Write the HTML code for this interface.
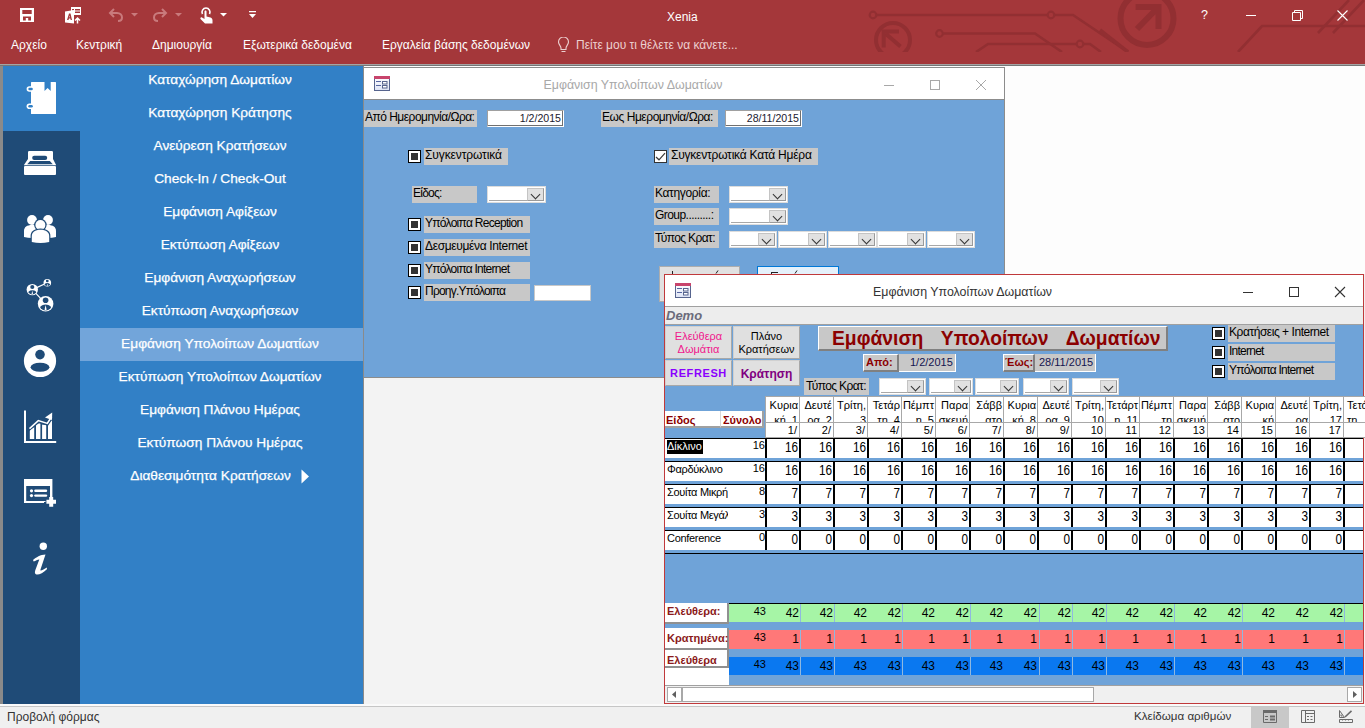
<!DOCTYPE html>
<html><head><meta charset="utf-8">
<style>
*{margin:0;padding:0;box-sizing:border-box}
html,body{width:1365px;height:728px;overflow:hidden;background:#f3f3f3;font-family:"Liberation Sans",sans-serif;position:relative}
.a{position:absolute}
.t{position:absolute;white-space:nowrap;line-height:1}
#title{left:0;top:0;width:1365px;height:64px;background:#a4373a}
.menu{color:#fff;font-size:12px;top:39px}
.nav{left:78.5px;width:283px;color:#fff;font-size:13.7px;text-align:center;-webkit-text-stroke:0.25px #fff}
.lbl{background:#c8c8c8;color:#000;font-size:12px;letter-spacing:-0.45px;line-height:14px;padding-left:1px;white-space:nowrap;overflow:hidden}
.cb{width:13px;height:13px;border:1px solid #000;background:#fff}
.cb:after{content:"";position:absolute;left:2px;top:2px;width:7px;height:7px;background:#333}
.inp{background:#fff;border-top:1px solid #a0a0a0;border-left:1px solid #a0a0a0;border-right:1px solid #fff;border-bottom:1px solid #fff;box-shadow:inset -1px -1px 0 #707070}
.cbk{width:13px;height:13px;border:1px solid #333;background:#fff}
.combo{background:#fff;border:1px solid #dcdcdc}
.combo:before{content:"";position:absolute;left:1px;right:18px;bottom:1px;height:1px;background:#a8a8a8}
.combo i{position:absolute;right:1px;top:1px;bottom:1px;width:17px;background:#e1e1e1;border:1px solid #c4c4c4;border-right-color:#9a9a9a;border-bottom-color:#9a9a9a}
.combo i:after{content:"";position:absolute;left:4px;top:2px;width:6px;height:6px;border-right:1px solid #333;border-bottom:1px solid #333;transform:rotate(45deg)}
.btn{background:#e0e0e0;border:1px solid #d0d0d0;border-right-color:#a8a8a8;border-bottom-color:#a8a8a8}
.raised{border-top:1px solid #fff;border-left:1px solid #fff;border-right:2px solid #808080;border-bottom:2px solid #808080}
.hdr{background:#fff;border-right:2px solid #a0a0a0;border-bottom:2px solid #a0a0a0}
.dh{background:#fff;border:1px solid #a8a8a8;overflow:hidden}
.dl{position:absolute;right:1px;top:1px;font-size:11px;line-height:14.5px;text-align:right;color:#000;white-space:pre}
.dd{background:#fff;border:1px solid #a8a8a8;border-top:0;font-size:11px;text-align:right;padding-right:2px;line-height:15px;color:#000}
.lab2{background:#fff;border-right:2px solid #909090;border-bottom:2px solid #909090}
</style></head><body>

<!-- Title bar + ribbon tabs -->
<div class="a" id="title"></div>
<div class="t" style="left:667px;top:11px;color:#fff;font-size:12px">Xenia</div>
<div class="t menu" style="left:11px">Αρχείο</div>
<div class="t menu" style="left:76px">Κεντρική</div>
<div class="t menu" style="left:152px">Δημιουργία</div>
<div class="t menu" style="left:243px">Εξωτερικά δεδομένα</div>
<div class="t menu" style="left:382px">Εργαλεία βάσης δεδομένων</div>
<div class="t menu" style="left:576px;color:#ecd0d0">Πείτε μου τι θέλετε να κάνετε...</div>

<!-- gray separator -->
<div class="a" style="left:0;top:64px;width:1365px;height:1px;background:#a4a4a4"></div><div class="a" style="left:0;top:65px;width:1365px;height:1px;background:#767676"></div>

<!-- Nav form -->
<div class="a" style="left:0;top:66px;width:3px;height:638px;background:#8a8a8a"></div>
<div class="a" style="left:3px;top:66px;width:360px;height:638px;background:#3280c6"></div>
<div class="a" style="left:3px;top:131px;width:77px;height:573px;background:#1f4b77"></div>
<div class="a" style="left:80px;top:328px;width:283px;height:33px;background:#72a5da"></div>
<div class="a" style="left:363px;top:66px;width:1px;height:638px;background:#8a8a8a"></div>

<div class="t nav" style="top:72.5px">Καταχώρηση Δωματίων</div>
<div class="t nav" style="top:105.5px">Καταχώρηση Κράτησης</div>
<div class="t nav" style="top:138.5px">Ανεύρεση Κρατήσεων</div>
<div class="t nav" style="top:171.5px">Check-In / Check-Out</div>
<div class="t nav" style="top:204.5px">Εμφάνιση Αφίξεων</div>
<div class="t nav" style="top:237.5px">Εκτύπωση Αφίξεων</div>
<div class="t nav" style="top:270.5px">Εμφάνιση Αναχωρήσεων</div>
<div class="t nav" style="top:303.5px">Εκτύπωση Αναχωρήσεων</div>
<div class="t nav" style="top:336.5px">Εμφάνιση Υπολοίπων Δωματίων</div>
<div class="t nav" style="top:369.5px">Εκτύπωση Υπολοίπων Δωματίων</div>
<div class="t nav" style="top:402.5px">Εμφάνιση Πλάνου Ημέρας</div>
<div class="t nav" style="top:435.5px">Εκτύπωση Πλάνου Ημέρας</div>
<div class="t nav" style="top:468.5px;left:69px">Διαθεσιμότητα Κρατήσεων</div>

<!-- Back window -->
<div class="a" style="left:364px;top:66px;width:1001px;height:312px;background:#fdfdfd"></div>
<div class="a" style="left:364px;top:67px;width:641px;height:311px;border:1px solid #8c8c8c;border-left:0;background:#6fa3d8"></div>
<div class="a" style="left:364px;top:68px;width:640px;height:32px;background:#fff;border-bottom:1px solid #8c8c8c"></div>
<div class="t" style="left:543.5px;top:78.5px;font-size:12.4px;color:#a8a8a8">Εμφάνιση Υπολοίπων Δωματίων</div>

<div class="a lbl" style="left:364px;top:110px;width:113px;height:17px;letter-spacing:-0.52px">Από Ημερομηνία/Ωρα:</div>
<div class="a inp" style="left:487px;top:110px;width:77px;height:17px"></div>
<div class="t" style="left:480px;width:81px;text-align:right;top:113px;font-size:10.6px;color:#1a1a30">1/2/2015</div>
<div class="a lbl" style="left:601px;top:110px;width:117px;height:17px;letter-spacing:-0.45px">Εως Ημερομηνία/Ωρα:</div>
<div class="a inp" style="left:725px;top:110px;width:77px;height:17px"></div>


<div class="t" style="left:700px;width:99px;text-align:right;top:113px;font-size:10.6px;color:#1a1a30">28/11/2015</div>

<div class="a cb" style="left:408px;top:150px"></div>
<div class="a lbl" style="left:424px;top:148px;width:84px;height:17px;letter-spacing:-0.11px">Συγκεντρωτικά</div>
<div class="a cbk" style="left:654px;top:150px"></div>
<div class="a lbl" style="left:669px;top:148px;width:149px;height:17px;padding-left:2px;letter-spacing:-0.22px">Συγκεντρωτικά Κατά Ημέρα</div>

<div class="a lbl" style="left:412px;top:186px;width:65px;height:17px;letter-spacing:-0.75px">Είδος:</div>
<div class="a combo" style="left:487px;top:186px;width:59px;height:17px"><i></i></div>

<div class="a cb" style="left:408px;top:218px"></div>
<div class="a lbl" style="left:424px;top:216px;width:106px;height:17px;letter-spacing:-0.72px">Υπόλοιπα Reception</div>
<div class="a cb" style="left:408px;top:241px"></div>
<div class="a lbl" style="left:424px;top:239px;width:106px;height:17px;letter-spacing:-0.35px">Δεσμευμένα Internet</div>
<div class="a cb" style="left:408px;top:264px"></div>
<div class="a lbl" style="left:424px;top:262px;width:106px;height:17px;letter-spacing:-0.75px">Υπόλοιπα Internet</div>
<div class="a cb" style="left:408px;top:286px"></div>
<div class="a lbl" style="left:424px;top:284px;width:106px;height:17px;letter-spacing:-0.78px">Προηγ.Υπόλοιπα</div>
<div class="a" style="left:534px;top:285px;width:57px;height:16px;background:#fff;border:1px solid #c8c8c8"></div>

<div class="a lbl" style="left:654px;top:186px;width:65px;height:17px;letter-spacing:-0.34px">Κατηγορία:</div>
<div class="a combo" style="left:729px;top:186px;width:59px;height:17px"><i></i></div>
<div class="a lbl" style="left:654px;top:208px;width:65px;height:17px;letter-spacing:-0.55px">Group.........:</div>
<div class="a combo" style="left:729px;top:208px;width:59px;height:17px"><i></i></div>
<div class="a lbl" style="left:654px;top:231px;width:65px;height:17px;letter-spacing:-0.61px">Τύπος Κρατ:</div>
<div class="a combo" style="left:729px;top:231px;width:48px;height:17px"><i></i></div>
<div class="a combo" style="left:778px;top:231px;width:49px;height:17px"><i></i></div>
<div class="a combo" style="left:828px;top:231px;width:49px;height:17px"><i></i></div>
<div class="a combo" style="left:877px;top:231px;width:49px;height:17px"><i></i></div>
<div class="a combo" style="left:927px;top:231px;width:48px;height:17px"><i></i></div>

<div class="a" style="left:659px;top:266px;width:81px;height:36px;background:#e1e1e1;border:1px solid #adadad"></div>
<div class="a" style="left:757px;top:266px;width:82px;height:20px;background:#e5f1fb;border:1px solid #0078d7"></div>

<div class="a" style="left:672px;top:271px;width:1px;height:3px;background:#222"></div>
<svg class="a" style="left:715px;top:270px" width="4" height="4"><path d="M1 3.5L3 0.5" stroke="#222" stroke-width="1"/></svg>
<div class="a" style="left:771px;top:272px;width:7px;height:1px;background:#222"></div><div class="a" style="left:771px;top:272px;width:1px;height:2px;background:#222"></div>
<svg class="a" style="left:794px;top:270px" width="4" height="4"><path d="M1 3.5L3 0.5" stroke="#222" stroke-width="1"/></svg>
<!-- window buttons back -->
<div class="a" style="left:884px;top:85px;width:10px;height:1px;background:#a8a8a8"></div>
<div class="a" style="left:930px;top:80px;width:10px;height:10px;border:1px solid #a8a8a8"></div>
<svg class="a" style="left:975px;top:79px" width="12" height="12"><path d="M1 1L11 11M11 1L1 11" stroke="#a8a8a8" stroke-width="1"/></svg>

<!-- FRONT START -->
<div class="a" style="left:664px;top:274px;width:701px;height:430px;background:#6fa3d8;border:1px solid #c0393b;border-right:0"></div>
<div class="a" style="left:1363px;top:274px;width:1px;height:430px;background:#c0393b"></div>
<div class="a" style="left:1364px;top:274px;width:1px;height:430px;background:#f0f0f0"></div>
<div class="a" style="left:665px;top:275px;width:698px;height:32px;background:#fff;border-bottom:1px solid #a0a0a0"></div>
<div class="t" style="left:873px;top:285.5px;font-size:12.4px;color:#333">Εμφάνιση Υπολοίπων Δωματίων</div>
<div class="a" style="left:1243px;top:292px;width:10px;height:1px;background:#333"></div>
<div class="a" style="left:1289px;top:287px;width:10px;height:10px;border:1px solid #333"></div>
<svg class="a" style="left:1334px;top:286px" width="12" height="12"><path d="M1 1L11 11M11 1L1 11" stroke="#333" stroke-width="1.1"/></svg>
<div class="a" style="left:665px;top:307px;width:698px;height:18px;background:#ededed;border-bottom:1px solid #a0a0a0"></div>
<div class="t" style="left:666px;top:309px;font-size:13px;font-weight:bold;font-style:italic;color:#6b6b7b">Demo</div>
<div class="a btn" style="left:665px;top:326px;width:67px;height:33px"><div style="color:#f0168c;font-size:11px;line-height:13px;padding-top:3px;text-align:center">Ελεύθερα<br>Δωμάτια</div></div>
<div class="a btn" style="left:733px;top:326px;width:67px;height:33px"><div style="color:#000;font-size:11px;line-height:13px;padding-top:3px;text-align:center">Πλάνο<br>Κρατήσεων</div></div>
<div class="a btn" style="left:665px;top:360px;width:67px;height:26px"><div style="color:#8a00ff;font-size:11px;font-weight:bold;line-height:25px;text-align:center;letter-spacing:0.6px">REFRESH</div></div>
<div class="a btn" style="left:733px;top:360px;width:67px;height:26px"><div style="color:#800080;font-size:12px;font-weight:bold;line-height:26px;text-align:center">Κράτηση</div></div>
<div class="a raised" style="left:818px;top:326px;width:350px;height:25px;background:#c8c8c8"></div>
<div class="t" style="left:832px;top:329px;font-size:19.3px;font-weight:bold;color:#8b0000;word-spacing:12.5px">Εμφάνιση Υπολοίπων Δωματίων</div>
<div class="a raised" style="left:863px;top:354px;width:36px;height:18px;background:#c8c8c8"></div>
<div class="t" style="left:866px;top:357px;font-size:11px;font-weight:bold;color:#8b0000">Από:</div>
<div class="a" style="left:899px;top:354px;width:57px;height:18px;background:#c8c8c8;border-right:1px solid #fff;border-bottom:1px solid #fff"></div>
<div class="t" style="left:910px;top:357px;font-size:11px;color:#141450">1/2/2015</div>
<div class="a raised" style="left:1003px;top:354px;width:32px;height:18px;background:#c8c8c8"></div>
<div class="t" style="left:1005px;top:357px;font-size:11px;font-weight:bold;color:#8b0000">Έως:</div>
<div class="a" style="left:1035px;top:354px;width:61px;height:18px;background:#c8c8c8;border-right:1px solid #fff;border-bottom:1px solid #fff"></div>
<div class="t" style="left:1039px;top:357px;font-size:11px;color:#141450">28/11/2015</div>
<div class="a lbl" style="left:804px;top:378px;width:65px;height:17px;padding-left:2px;line-height:17px;letter-spacing:-0.61px">Τύπος Κρατ:</div>
<div class="a combo" style="left:879px;top:378px;width:47px;height:17px"><i></i></div>
<div class="a combo" style="left:929px;top:378px;width:44px;height:17px"><i></i></div>
<div class="a combo" style="left:975px;top:378px;width:44px;height:17px"><i></i></div>
<div class="a combo" style="left:1023px;top:378px;width:46px;height:17px"><i></i></div>
<div class="a combo" style="left:1072px;top:378px;width:47px;height:17px"><i></i></div>
<div class="a cb" style="left:1212px;top:327px"></div>
<div class="a lbl" style="left:1228px;top:325px;width:107px;height:17px;letter-spacing:-0.46px">Κρατήσεις + Internet</div>
<div class="a cb" style="left:1212px;top:346px"></div>
<div class="a lbl" style="left:1228px;top:344px;width:107px;height:17px;letter-spacing:-0.76px">Internet</div>
<div class="a cb" style="left:1212px;top:365px"></div>
<div class="a lbl" style="left:1228px;top:363px;width:107px;height:17px;letter-spacing:-0.75px">Υπόλοιπα Internet</div>
<div class="a" style="left:665px;top:411px;width:56px;height:17px;background:#fff;border-right:1px solid #d8d8d8;border-bottom:2px solid #a0a0a0"></div>
<div class="a hdr" style="left:721px;top:411px;width:43px;height:17px"></div>
<div class="t" style="left:666px;top:415px;font-size:11px;font-weight:bold;color:#8b0000">Είδος</div>
<div class="t" style="left:723px;top:415px;font-size:11px;font-weight:bold;color:#8b0000">Σύνολο</div>
<div class="a dh" style="left:765px;top:396px;width:35px;height:27px"><div class="dl">Κυρια<br>κή  1</div></div>
<div class="a dd" style="left:765px;top:423px;width:35px;height:15px">1/</div>
<div class="a dh" style="left:799px;top:396px;width:35px;height:27px"><div class="dl">Δευτέ<br>ρα  2</div></div>
<div class="a dd" style="left:799px;top:423px;width:35px;height:15px">2/</div>
<div class="a dh" style="left:833px;top:396px;width:35px;height:27px"><div class="dl">Τρίτη,<br>3</div></div>
<div class="a dd" style="left:833px;top:423px;width:35px;height:15px">3/</div>
<div class="a dh" style="left:867px;top:396px;width:35px;height:27px"><div class="dl">Τετάρ<br>τη  4</div></div>
<div class="a dd" style="left:867px;top:423px;width:35px;height:15px">4/</div>
<div class="a dh" style="left:901px;top:396px;width:35px;height:27px"><div class="dl">Πέμπτ<br>η  5</div></div>
<div class="a dd" style="left:901px;top:423px;width:35px;height:15px">5/</div>
<div class="a dh" style="left:935px;top:396px;width:35px;height:27px"><div class="dl">Παρα<br>σκευή</div></div>
<div class="a dd" style="left:935px;top:423px;width:35px;height:15px">6/</div>
<div class="a dh" style="left:969px;top:396px;width:35px;height:27px"><div class="dl">Σάββ<br>ατο</div></div>
<div class="a dd" style="left:969px;top:423px;width:35px;height:15px">7/</div>
<div class="a dh" style="left:1003px;top:396px;width:35px;height:27px"><div class="dl">Κυρια<br>κή  8</div></div>
<div class="a dd" style="left:1003px;top:423px;width:35px;height:15px">8/</div>
<div class="a dh" style="left:1037px;top:396px;width:35px;height:27px"><div class="dl">Δευτέ<br>ρα  9</div></div>
<div class="a dd" style="left:1037px;top:423px;width:35px;height:15px">9/</div>
<div class="a dh" style="left:1071px;top:396px;width:35px;height:27px"><div class="dl">Τρίτη,<br>10</div></div>
<div class="a dd" style="left:1071px;top:423px;width:35px;height:15px">10</div>
<div class="a dh" style="left:1105px;top:396px;width:35px;height:27px"><div class="dl">Τετάρτ<br>η  11</div></div>
<div class="a dd" style="left:1105px;top:423px;width:35px;height:15px">11</div>
<div class="a dh" style="left:1139px;top:396px;width:35px;height:27px"><div class="dl">Πέμπτ<br>τη</div></div>
<div class="a dd" style="left:1139px;top:423px;width:35px;height:15px">12</div>
<div class="a dh" style="left:1173px;top:396px;width:35px;height:27px"><div class="dl">Παρα<br>σκευή</div></div>
<div class="a dd" style="left:1173px;top:423px;width:35px;height:15px">13</div>
<div class="a dh" style="left:1207px;top:396px;width:35px;height:27px"><div class="dl">Σάββ<br>ατο</div></div>
<div class="a dd" style="left:1207px;top:423px;width:35px;height:15px">14</div>
<div class="a dh" style="left:1241px;top:396px;width:35px;height:27px"><div class="dl">Κυρια<br>κή</div></div>
<div class="a dd" style="left:1241px;top:423px;width:35px;height:15px">15</div>
<div class="a dh" style="left:1275px;top:396px;width:35px;height:27px"><div class="dl">Δευτέ<br>ρα</div></div>
<div class="a dd" style="left:1275px;top:423px;width:35px;height:15px">16</div>
<div class="a dh" style="left:1309px;top:396px;width:35px;height:27px"><div class="dl">Τρίτη,<br>17</div></div>
<div class="a dd" style="left:1309px;top:423px;width:35px;height:15px">17</div>
<div class="a dh" style="left:1343px;top:396px;width:35px;height:27px"><div class="dl" style="left:3px;right:auto;text-align:left">Τετάρτη<br>τη</div></div>
<div class="a dd" style="left:1343px;top:423px;width:35px;height:15px"></div>
<div class="a" style="left:665px;top:438px;width:698px;height:20px;background:#fff;border-top:1px solid #000"></div>
<div class="a" style="left:667px;top:440px;width:36px;height:14px;background:#000"></div>
<div class="t" style="left:667px;top:441px;font-size:11px;color:#fff">Δίκλινο</div>
<div class="t" style="left:700px;width:65px;text-align:right;top:440px;font-size:11px;color:#000">16</div>
<div class="a" style="left:765px;top:439px;width:2px;height:19px;background:#000"></div>
<div class="t" style="left:765px;width:33px;text-align:right;top:440px;font-size:14px;color:#000;transform:scaleX(0.84);transform-origin:right">16</div>
<div class="a" style="left:799px;top:439px;width:2px;height:19px;background:#000"></div>
<div class="t" style="left:799px;width:33px;text-align:right;top:440px;font-size:14px;color:#000;transform:scaleX(0.84);transform-origin:right">16</div>
<div class="a" style="left:833px;top:439px;width:2px;height:19px;background:#000"></div>
<div class="t" style="left:833px;width:33px;text-align:right;top:440px;font-size:14px;color:#000;transform:scaleX(0.84);transform-origin:right">16</div>
<div class="a" style="left:867px;top:439px;width:2px;height:19px;background:#000"></div>
<div class="t" style="left:867px;width:33px;text-align:right;top:440px;font-size:14px;color:#000;transform:scaleX(0.84);transform-origin:right">16</div>
<div class="a" style="left:901px;top:439px;width:2px;height:19px;background:#000"></div>
<div class="t" style="left:901px;width:33px;text-align:right;top:440px;font-size:14px;color:#000;transform:scaleX(0.84);transform-origin:right">16</div>
<div class="a" style="left:935px;top:439px;width:2px;height:19px;background:#000"></div>
<div class="t" style="left:935px;width:33px;text-align:right;top:440px;font-size:14px;color:#000;transform:scaleX(0.84);transform-origin:right">16</div>
<div class="a" style="left:969px;top:439px;width:2px;height:19px;background:#000"></div>
<div class="t" style="left:969px;width:33px;text-align:right;top:440px;font-size:14px;color:#000;transform:scaleX(0.84);transform-origin:right">16</div>
<div class="a" style="left:1003px;top:439px;width:2px;height:19px;background:#000"></div>
<div class="t" style="left:1003px;width:33px;text-align:right;top:440px;font-size:14px;color:#000;transform:scaleX(0.84);transform-origin:right">16</div>
<div class="a" style="left:1037px;top:439px;width:2px;height:19px;background:#000"></div>
<div class="t" style="left:1037px;width:33px;text-align:right;top:440px;font-size:14px;color:#000;transform:scaleX(0.84);transform-origin:right">16</div>
<div class="a" style="left:1071px;top:439px;width:2px;height:19px;background:#000"></div>
<div class="t" style="left:1071px;width:33px;text-align:right;top:440px;font-size:14px;color:#000;transform:scaleX(0.84);transform-origin:right">16</div>
<div class="a" style="left:1105px;top:439px;width:2px;height:19px;background:#000"></div>
<div class="t" style="left:1105px;width:33px;text-align:right;top:440px;font-size:14px;color:#000;transform:scaleX(0.84);transform-origin:right">16</div>
<div class="a" style="left:1139px;top:439px;width:2px;height:19px;background:#000"></div>
<div class="t" style="left:1139px;width:33px;text-align:right;top:440px;font-size:14px;color:#000;transform:scaleX(0.84);transform-origin:right">16</div>
<div class="a" style="left:1173px;top:439px;width:2px;height:19px;background:#000"></div>
<div class="t" style="left:1173px;width:33px;text-align:right;top:440px;font-size:14px;color:#000;transform:scaleX(0.84);transform-origin:right">16</div>
<div class="a" style="left:1207px;top:439px;width:2px;height:19px;background:#000"></div>
<div class="t" style="left:1207px;width:33px;text-align:right;top:440px;font-size:14px;color:#000;transform:scaleX(0.84);transform-origin:right">16</div>
<div class="a" style="left:1241px;top:439px;width:2px;height:19px;background:#000"></div>
<div class="t" style="left:1241px;width:33px;text-align:right;top:440px;font-size:14px;color:#000;transform:scaleX(0.84);transform-origin:right">16</div>
<div class="a" style="left:1275px;top:439px;width:2px;height:19px;background:#000"></div>
<div class="t" style="left:1275px;width:33px;text-align:right;top:440px;font-size:14px;color:#000;transform:scaleX(0.84);transform-origin:right">16</div>
<div class="a" style="left:1309px;top:439px;width:2px;height:19px;background:#000"></div>
<div class="t" style="left:1309px;width:33px;text-align:right;top:440px;font-size:14px;color:#000;transform:scaleX(0.84);transform-origin:right">16</div>
<div class="a" style="left:1343px;top:439px;width:2px;height:19px;background:#000"></div>
<div class="a" style="left:665px;top:458px;width:698px;height:3px;background:#6fa3d8"></div>
<div class="a" style="left:665px;top:461px;width:698px;height:20px;background:#fff;border-top:1px solid #000"></div>
<div class="a" style="left:667px;top:462px;width:61px;height:18px;overflow:hidden"><div class="t" style="left:0;top:2px;font-size:11px;color:#000;letter-spacing:-0.3px">Φαρδύκλινο</div></div>
<div class="t" style="left:700px;width:65px;text-align:right;top:463px;font-size:11px;color:#000">16</div>
<div class="a" style="left:765px;top:462px;width:2px;height:19px;background:#000"></div>
<div class="t" style="left:765px;width:33px;text-align:right;top:463px;font-size:14px;color:#000;transform:scaleX(0.84);transform-origin:right">16</div>
<div class="a" style="left:799px;top:462px;width:2px;height:19px;background:#000"></div>
<div class="t" style="left:799px;width:33px;text-align:right;top:463px;font-size:14px;color:#000;transform:scaleX(0.84);transform-origin:right">16</div>
<div class="a" style="left:833px;top:462px;width:2px;height:19px;background:#000"></div>
<div class="t" style="left:833px;width:33px;text-align:right;top:463px;font-size:14px;color:#000;transform:scaleX(0.84);transform-origin:right">16</div>
<div class="a" style="left:867px;top:462px;width:2px;height:19px;background:#000"></div>
<div class="t" style="left:867px;width:33px;text-align:right;top:463px;font-size:14px;color:#000;transform:scaleX(0.84);transform-origin:right">16</div>
<div class="a" style="left:901px;top:462px;width:2px;height:19px;background:#000"></div>
<div class="t" style="left:901px;width:33px;text-align:right;top:463px;font-size:14px;color:#000;transform:scaleX(0.84);transform-origin:right">16</div>
<div class="a" style="left:935px;top:462px;width:2px;height:19px;background:#000"></div>
<div class="t" style="left:935px;width:33px;text-align:right;top:463px;font-size:14px;color:#000;transform:scaleX(0.84);transform-origin:right">16</div>
<div class="a" style="left:969px;top:462px;width:2px;height:19px;background:#000"></div>
<div class="t" style="left:969px;width:33px;text-align:right;top:463px;font-size:14px;color:#000;transform:scaleX(0.84);transform-origin:right">16</div>
<div class="a" style="left:1003px;top:462px;width:2px;height:19px;background:#000"></div>
<div class="t" style="left:1003px;width:33px;text-align:right;top:463px;font-size:14px;color:#000;transform:scaleX(0.84);transform-origin:right">16</div>
<div class="a" style="left:1037px;top:462px;width:2px;height:19px;background:#000"></div>
<div class="t" style="left:1037px;width:33px;text-align:right;top:463px;font-size:14px;color:#000;transform:scaleX(0.84);transform-origin:right">16</div>
<div class="a" style="left:1071px;top:462px;width:2px;height:19px;background:#000"></div>
<div class="t" style="left:1071px;width:33px;text-align:right;top:463px;font-size:14px;color:#000;transform:scaleX(0.84);transform-origin:right">16</div>
<div class="a" style="left:1105px;top:462px;width:2px;height:19px;background:#000"></div>
<div class="t" style="left:1105px;width:33px;text-align:right;top:463px;font-size:14px;color:#000;transform:scaleX(0.84);transform-origin:right">16</div>
<div class="a" style="left:1139px;top:462px;width:2px;height:19px;background:#000"></div>
<div class="t" style="left:1139px;width:33px;text-align:right;top:463px;font-size:14px;color:#000;transform:scaleX(0.84);transform-origin:right">16</div>
<div class="a" style="left:1173px;top:462px;width:2px;height:19px;background:#000"></div>
<div class="t" style="left:1173px;width:33px;text-align:right;top:463px;font-size:14px;color:#000;transform:scaleX(0.84);transform-origin:right">16</div>
<div class="a" style="left:1207px;top:462px;width:2px;height:19px;background:#000"></div>
<div class="t" style="left:1207px;width:33px;text-align:right;top:463px;font-size:14px;color:#000;transform:scaleX(0.84);transform-origin:right">16</div>
<div class="a" style="left:1241px;top:462px;width:2px;height:19px;background:#000"></div>
<div class="t" style="left:1241px;width:33px;text-align:right;top:463px;font-size:14px;color:#000;transform:scaleX(0.84);transform-origin:right">16</div>
<div class="a" style="left:1275px;top:462px;width:2px;height:19px;background:#000"></div>
<div class="t" style="left:1275px;width:33px;text-align:right;top:463px;font-size:14px;color:#000;transform:scaleX(0.84);transform-origin:right">16</div>
<div class="a" style="left:1309px;top:462px;width:2px;height:19px;background:#000"></div>
<div class="t" style="left:1309px;width:33px;text-align:right;top:463px;font-size:14px;color:#000;transform:scaleX(0.84);transform-origin:right">16</div>
<div class="a" style="left:1343px;top:462px;width:2px;height:19px;background:#000"></div>
<div class="a" style="left:665px;top:481px;width:698px;height:3px;background:#6fa3d8"></div>
<div class="a" style="left:665px;top:484px;width:698px;height:20px;background:#fff;border-top:1px solid #000"></div>
<div class="a" style="left:667px;top:485px;width:61px;height:18px;overflow:hidden"><div class="t" style="left:0;top:2px;font-size:11px;color:#000;letter-spacing:-0.3px">Σουίτα Μικρή</div></div>
<div class="t" style="left:700px;width:65px;text-align:right;top:486px;font-size:11px;color:#000">8</div>
<div class="a" style="left:765px;top:485px;width:2px;height:19px;background:#000"></div>
<div class="t" style="left:765px;width:33px;text-align:right;top:486px;font-size:14px;color:#000;transform:scaleX(0.84);transform-origin:right">7</div>
<div class="a" style="left:799px;top:485px;width:2px;height:19px;background:#000"></div>
<div class="t" style="left:799px;width:33px;text-align:right;top:486px;font-size:14px;color:#000;transform:scaleX(0.84);transform-origin:right">7</div>
<div class="a" style="left:833px;top:485px;width:2px;height:19px;background:#000"></div>
<div class="t" style="left:833px;width:33px;text-align:right;top:486px;font-size:14px;color:#000;transform:scaleX(0.84);transform-origin:right">7</div>
<div class="a" style="left:867px;top:485px;width:2px;height:19px;background:#000"></div>
<div class="t" style="left:867px;width:33px;text-align:right;top:486px;font-size:14px;color:#000;transform:scaleX(0.84);transform-origin:right">7</div>
<div class="a" style="left:901px;top:485px;width:2px;height:19px;background:#000"></div>
<div class="t" style="left:901px;width:33px;text-align:right;top:486px;font-size:14px;color:#000;transform:scaleX(0.84);transform-origin:right">7</div>
<div class="a" style="left:935px;top:485px;width:2px;height:19px;background:#000"></div>
<div class="t" style="left:935px;width:33px;text-align:right;top:486px;font-size:14px;color:#000;transform:scaleX(0.84);transform-origin:right">7</div>
<div class="a" style="left:969px;top:485px;width:2px;height:19px;background:#000"></div>
<div class="t" style="left:969px;width:33px;text-align:right;top:486px;font-size:14px;color:#000;transform:scaleX(0.84);transform-origin:right">7</div>
<div class="a" style="left:1003px;top:485px;width:2px;height:19px;background:#000"></div>
<div class="t" style="left:1003px;width:33px;text-align:right;top:486px;font-size:14px;color:#000;transform:scaleX(0.84);transform-origin:right">7</div>
<div class="a" style="left:1037px;top:485px;width:2px;height:19px;background:#000"></div>
<div class="t" style="left:1037px;width:33px;text-align:right;top:486px;font-size:14px;color:#000;transform:scaleX(0.84);transform-origin:right">7</div>
<div class="a" style="left:1071px;top:485px;width:2px;height:19px;background:#000"></div>
<div class="t" style="left:1071px;width:33px;text-align:right;top:486px;font-size:14px;color:#000;transform:scaleX(0.84);transform-origin:right">7</div>
<div class="a" style="left:1105px;top:485px;width:2px;height:19px;background:#000"></div>
<div class="t" style="left:1105px;width:33px;text-align:right;top:486px;font-size:14px;color:#000;transform:scaleX(0.84);transform-origin:right">7</div>
<div class="a" style="left:1139px;top:485px;width:2px;height:19px;background:#000"></div>
<div class="t" style="left:1139px;width:33px;text-align:right;top:486px;font-size:14px;color:#000;transform:scaleX(0.84);transform-origin:right">7</div>
<div class="a" style="left:1173px;top:485px;width:2px;height:19px;background:#000"></div>
<div class="t" style="left:1173px;width:33px;text-align:right;top:486px;font-size:14px;color:#000;transform:scaleX(0.84);transform-origin:right">7</div>
<div class="a" style="left:1207px;top:485px;width:2px;height:19px;background:#000"></div>
<div class="t" style="left:1207px;width:33px;text-align:right;top:486px;font-size:14px;color:#000;transform:scaleX(0.84);transform-origin:right">7</div>
<div class="a" style="left:1241px;top:485px;width:2px;height:19px;background:#000"></div>
<div class="t" style="left:1241px;width:33px;text-align:right;top:486px;font-size:14px;color:#000;transform:scaleX(0.84);transform-origin:right">7</div>
<div class="a" style="left:1275px;top:485px;width:2px;height:19px;background:#000"></div>
<div class="t" style="left:1275px;width:33px;text-align:right;top:486px;font-size:14px;color:#000;transform:scaleX(0.84);transform-origin:right">7</div>
<div class="a" style="left:1309px;top:485px;width:2px;height:19px;background:#000"></div>
<div class="t" style="left:1309px;width:33px;text-align:right;top:486px;font-size:14px;color:#000;transform:scaleX(0.84);transform-origin:right">7</div>
<div class="a" style="left:1343px;top:485px;width:2px;height:19px;background:#000"></div>
<div class="a" style="left:665px;top:504px;width:698px;height:3px;background:#6fa3d8"></div>
<div class="a" style="left:665px;top:507px;width:698px;height:20px;background:#fff;border-top:1px solid #000"></div>
<div class="a" style="left:667px;top:508px;width:61px;height:18px;overflow:hidden"><div class="t" style="left:0;top:2px;font-size:11px;color:#000;letter-spacing:-0.3px">Σουίτα Μεγάλη</div></div>
<div class="t" style="left:700px;width:65px;text-align:right;top:509px;font-size:11px;color:#000">3</div>
<div class="a" style="left:765px;top:508px;width:2px;height:19px;background:#000"></div>
<div class="t" style="left:765px;width:33px;text-align:right;top:509px;font-size:14px;color:#000;transform:scaleX(0.84);transform-origin:right">3</div>
<div class="a" style="left:799px;top:508px;width:2px;height:19px;background:#000"></div>
<div class="t" style="left:799px;width:33px;text-align:right;top:509px;font-size:14px;color:#000;transform:scaleX(0.84);transform-origin:right">3</div>
<div class="a" style="left:833px;top:508px;width:2px;height:19px;background:#000"></div>
<div class="t" style="left:833px;width:33px;text-align:right;top:509px;font-size:14px;color:#000;transform:scaleX(0.84);transform-origin:right">3</div>
<div class="a" style="left:867px;top:508px;width:2px;height:19px;background:#000"></div>
<div class="t" style="left:867px;width:33px;text-align:right;top:509px;font-size:14px;color:#000;transform:scaleX(0.84);transform-origin:right">3</div>
<div class="a" style="left:901px;top:508px;width:2px;height:19px;background:#000"></div>
<div class="t" style="left:901px;width:33px;text-align:right;top:509px;font-size:14px;color:#000;transform:scaleX(0.84);transform-origin:right">3</div>
<div class="a" style="left:935px;top:508px;width:2px;height:19px;background:#000"></div>
<div class="t" style="left:935px;width:33px;text-align:right;top:509px;font-size:14px;color:#000;transform:scaleX(0.84);transform-origin:right">3</div>
<div class="a" style="left:969px;top:508px;width:2px;height:19px;background:#000"></div>
<div class="t" style="left:969px;width:33px;text-align:right;top:509px;font-size:14px;color:#000;transform:scaleX(0.84);transform-origin:right">3</div>
<div class="a" style="left:1003px;top:508px;width:2px;height:19px;background:#000"></div>
<div class="t" style="left:1003px;width:33px;text-align:right;top:509px;font-size:14px;color:#000;transform:scaleX(0.84);transform-origin:right">3</div>
<div class="a" style="left:1037px;top:508px;width:2px;height:19px;background:#000"></div>
<div class="t" style="left:1037px;width:33px;text-align:right;top:509px;font-size:14px;color:#000;transform:scaleX(0.84);transform-origin:right">3</div>
<div class="a" style="left:1071px;top:508px;width:2px;height:19px;background:#000"></div>
<div class="t" style="left:1071px;width:33px;text-align:right;top:509px;font-size:14px;color:#000;transform:scaleX(0.84);transform-origin:right">3</div>
<div class="a" style="left:1105px;top:508px;width:2px;height:19px;background:#000"></div>
<div class="t" style="left:1105px;width:33px;text-align:right;top:509px;font-size:14px;color:#000;transform:scaleX(0.84);transform-origin:right">3</div>
<div class="a" style="left:1139px;top:508px;width:2px;height:19px;background:#000"></div>
<div class="t" style="left:1139px;width:33px;text-align:right;top:509px;font-size:14px;color:#000;transform:scaleX(0.84);transform-origin:right">3</div>
<div class="a" style="left:1173px;top:508px;width:2px;height:19px;background:#000"></div>
<div class="t" style="left:1173px;width:33px;text-align:right;top:509px;font-size:14px;color:#000;transform:scaleX(0.84);transform-origin:right">3</div>
<div class="a" style="left:1207px;top:508px;width:2px;height:19px;background:#000"></div>
<div class="t" style="left:1207px;width:33px;text-align:right;top:509px;font-size:14px;color:#000;transform:scaleX(0.84);transform-origin:right">3</div>
<div class="a" style="left:1241px;top:508px;width:2px;height:19px;background:#000"></div>
<div class="t" style="left:1241px;width:33px;text-align:right;top:509px;font-size:14px;color:#000;transform:scaleX(0.84);transform-origin:right">3</div>
<div class="a" style="left:1275px;top:508px;width:2px;height:19px;background:#000"></div>
<div class="t" style="left:1275px;width:33px;text-align:right;top:509px;font-size:14px;color:#000;transform:scaleX(0.84);transform-origin:right">3</div>
<div class="a" style="left:1309px;top:508px;width:2px;height:19px;background:#000"></div>
<div class="t" style="left:1309px;width:33px;text-align:right;top:509px;font-size:14px;color:#000;transform:scaleX(0.84);transform-origin:right">3</div>
<div class="a" style="left:1343px;top:508px;width:2px;height:19px;background:#000"></div>
<div class="a" style="left:665px;top:527px;width:698px;height:3px;background:#6fa3d8"></div>
<div class="a" style="left:665px;top:530px;width:698px;height:20px;background:#fff;border-top:1px solid #000"></div>
<div class="a" style="left:667px;top:531px;width:61px;height:18px;overflow:hidden"><div class="t" style="left:0;top:2px;font-size:11px;color:#000;letter-spacing:-0.3px">Conference</div></div>
<div class="t" style="left:700px;width:65px;text-align:right;top:532px;font-size:11px;color:#000">0</div>
<div class="a" style="left:765px;top:531px;width:2px;height:19px;background:#000"></div>
<div class="t" style="left:765px;width:33px;text-align:right;top:532px;font-size:14px;color:#000;transform:scaleX(0.84);transform-origin:right">0</div>
<div class="a" style="left:799px;top:531px;width:2px;height:19px;background:#000"></div>
<div class="t" style="left:799px;width:33px;text-align:right;top:532px;font-size:14px;color:#000;transform:scaleX(0.84);transform-origin:right">0</div>
<div class="a" style="left:833px;top:531px;width:2px;height:19px;background:#000"></div>
<div class="t" style="left:833px;width:33px;text-align:right;top:532px;font-size:14px;color:#000;transform:scaleX(0.84);transform-origin:right">0</div>
<div class="a" style="left:867px;top:531px;width:2px;height:19px;background:#000"></div>
<div class="t" style="left:867px;width:33px;text-align:right;top:532px;font-size:14px;color:#000;transform:scaleX(0.84);transform-origin:right">0</div>
<div class="a" style="left:901px;top:531px;width:2px;height:19px;background:#000"></div>
<div class="t" style="left:901px;width:33px;text-align:right;top:532px;font-size:14px;color:#000;transform:scaleX(0.84);transform-origin:right">0</div>
<div class="a" style="left:935px;top:531px;width:2px;height:19px;background:#000"></div>
<div class="t" style="left:935px;width:33px;text-align:right;top:532px;font-size:14px;color:#000;transform:scaleX(0.84);transform-origin:right">0</div>
<div class="a" style="left:969px;top:531px;width:2px;height:19px;background:#000"></div>
<div class="t" style="left:969px;width:33px;text-align:right;top:532px;font-size:14px;color:#000;transform:scaleX(0.84);transform-origin:right">0</div>
<div class="a" style="left:1003px;top:531px;width:2px;height:19px;background:#000"></div>
<div class="t" style="left:1003px;width:33px;text-align:right;top:532px;font-size:14px;color:#000;transform:scaleX(0.84);transform-origin:right">0</div>
<div class="a" style="left:1037px;top:531px;width:2px;height:19px;background:#000"></div>
<div class="t" style="left:1037px;width:33px;text-align:right;top:532px;font-size:14px;color:#000;transform:scaleX(0.84);transform-origin:right">0</div>
<div class="a" style="left:1071px;top:531px;width:2px;height:19px;background:#000"></div>
<div class="t" style="left:1071px;width:33px;text-align:right;top:532px;font-size:14px;color:#000;transform:scaleX(0.84);transform-origin:right">0</div>
<div class="a" style="left:1105px;top:531px;width:2px;height:19px;background:#000"></div>
<div class="t" style="left:1105px;width:33px;text-align:right;top:532px;font-size:14px;color:#000;transform:scaleX(0.84);transform-origin:right">0</div>
<div class="a" style="left:1139px;top:531px;width:2px;height:19px;background:#000"></div>
<div class="t" style="left:1139px;width:33px;text-align:right;top:532px;font-size:14px;color:#000;transform:scaleX(0.84);transform-origin:right">0</div>
<div class="a" style="left:1173px;top:531px;width:2px;height:19px;background:#000"></div>
<div class="t" style="left:1173px;width:33px;text-align:right;top:532px;font-size:14px;color:#000;transform:scaleX(0.84);transform-origin:right">0</div>
<div class="a" style="left:1207px;top:531px;width:2px;height:19px;background:#000"></div>
<div class="t" style="left:1207px;width:33px;text-align:right;top:532px;font-size:14px;color:#000;transform:scaleX(0.84);transform-origin:right">0</div>
<div class="a" style="left:1241px;top:531px;width:2px;height:19px;background:#000"></div>
<div class="t" style="left:1241px;width:33px;text-align:right;top:532px;font-size:14px;color:#000;transform:scaleX(0.84);transform-origin:right">0</div>
<div class="a" style="left:1275px;top:531px;width:2px;height:19px;background:#000"></div>
<div class="t" style="left:1275px;width:33px;text-align:right;top:532px;font-size:14px;color:#000;transform:scaleX(0.84);transform-origin:right">0</div>
<div class="a" style="left:1309px;top:531px;width:2px;height:19px;background:#000"></div>
<div class="t" style="left:1309px;width:33px;text-align:right;top:532px;font-size:14px;color:#000;transform:scaleX(0.84);transform-origin:right">0</div>
<div class="a" style="left:1343px;top:531px;width:2px;height:19px;background:#000"></div>
<div class="a" style="left:665px;top:550px;width:698px;height:3px;background:#6fa3d8"></div>
<div class="a" style="left:665px;top:553px;width:698px;height:1px;background:#000"></div>
<div class="a" style="left:729px;top:603px;width:634px;height:1px;background:#000"></div>
<div class="a" style="left:729px;top:604px;width:634px;height:18px;background:#a6f5a6"></div>
<div class="a" style="left:800px;top:604px;width:1px;height:18px;background:#8fb8e0"></div>
<div class="a" style="left:834px;top:604px;width:1px;height:18px;background:#8fb8e0"></div>
<div class="a" style="left:902px;top:604px;width:1px;height:18px;background:#8fb8e0"></div>
<div class="a" style="left:970px;top:604px;width:1px;height:18px;background:#8fb8e0"></div>
<div class="a" style="left:1039px;top:604px;width:1px;height:18px;background:#8fb8e0"></div>
<div class="a" style="left:1072px;top:604px;width:1px;height:18px;background:#8fb8e0"></div>
<div class="a" style="left:1106px;top:604px;width:1px;height:18px;background:#8fb8e0"></div>
<div class="a" style="left:1174px;top:604px;width:1px;height:18px;background:#8fb8e0"></div>
<div class="a" style="left:1242px;top:604px;width:1px;height:18px;background:#8fb8e0"></div>
<div class="a" style="left:1344px;top:604px;width:1px;height:18px;background:#8fb8e0"></div>
<div class="t" style="left:740px;width:26px;text-align:right;top:606px;font-size:11px;color:#000">43</div>
<div class="t" style="left:765px;width:34px;text-align:right;top:606px;font-size:13px;color:#000;transform:scaleX(0.92);transform-origin:right">42</div>
<div class="t" style="left:799px;width:34px;text-align:right;top:606px;font-size:13px;color:#000;transform:scaleX(0.92);transform-origin:right">42</div>
<div class="t" style="left:833px;width:34px;text-align:right;top:606px;font-size:13px;color:#000;transform:scaleX(0.92);transform-origin:right">42</div>
<div class="t" style="left:867px;width:34px;text-align:right;top:606px;font-size:13px;color:#000;transform:scaleX(0.92);transform-origin:right">42</div>
<div class="t" style="left:901px;width:34px;text-align:right;top:606px;font-size:13px;color:#000;transform:scaleX(0.92);transform-origin:right">42</div>
<div class="t" style="left:935px;width:34px;text-align:right;top:606px;font-size:13px;color:#000;transform:scaleX(0.92);transform-origin:right">42</div>
<div class="t" style="left:969px;width:34px;text-align:right;top:606px;font-size:13px;color:#000;transform:scaleX(0.92);transform-origin:right">42</div>
<div class="t" style="left:1003px;width:34px;text-align:right;top:606px;font-size:13px;color:#000;transform:scaleX(0.92);transform-origin:right">42</div>
<div class="t" style="left:1037px;width:34px;text-align:right;top:606px;font-size:13px;color:#000;transform:scaleX(0.92);transform-origin:right">42</div>
<div class="t" style="left:1071px;width:34px;text-align:right;top:606px;font-size:13px;color:#000;transform:scaleX(0.92);transform-origin:right">42</div>
<div class="t" style="left:1105px;width:34px;text-align:right;top:606px;font-size:13px;color:#000;transform:scaleX(0.92);transform-origin:right">42</div>
<div class="t" style="left:1139px;width:34px;text-align:right;top:606px;font-size:13px;color:#000;transform:scaleX(0.92);transform-origin:right">42</div>
<div class="t" style="left:1173px;width:34px;text-align:right;top:606px;font-size:13px;color:#000;transform:scaleX(0.92);transform-origin:right">42</div>
<div class="t" style="left:1207px;width:34px;text-align:right;top:606px;font-size:13px;color:#000;transform:scaleX(0.92);transform-origin:right">42</div>
<div class="t" style="left:1241px;width:34px;text-align:right;top:606px;font-size:13px;color:#000;transform:scaleX(0.92);transform-origin:right">42</div>
<div class="t" style="left:1275px;width:34px;text-align:right;top:606px;font-size:13px;color:#000;transform:scaleX(0.92);transform-origin:right">42</div>
<div class="t" style="left:1309px;width:34px;text-align:right;top:606px;font-size:13px;color:#000;transform:scaleX(0.92);transform-origin:right">42</div>
<div class="a" style="left:729px;top:630px;width:634px;height:19px;background:#ff7878"></div>
<div class="a" style="left:800px;top:630px;width:1px;height:19px;background:#8fb8e0"></div>
<div class="a" style="left:834px;top:630px;width:1px;height:19px;background:#8fb8e0"></div>
<div class="a" style="left:902px;top:630px;width:1px;height:19px;background:#8fb8e0"></div>
<div class="a" style="left:970px;top:630px;width:1px;height:19px;background:#8fb8e0"></div>
<div class="a" style="left:1039px;top:630px;width:1px;height:19px;background:#8fb8e0"></div>
<div class="a" style="left:1072px;top:630px;width:1px;height:19px;background:#8fb8e0"></div>
<div class="a" style="left:1106px;top:630px;width:1px;height:19px;background:#8fb8e0"></div>
<div class="a" style="left:1174px;top:630px;width:1px;height:19px;background:#8fb8e0"></div>
<div class="a" style="left:1242px;top:630px;width:1px;height:19px;background:#8fb8e0"></div>
<div class="a" style="left:1344px;top:630px;width:1px;height:19px;background:#8fb8e0"></div>
<div class="t" style="left:740px;width:26px;text-align:right;top:632px;font-size:11px;color:#000">43</div>
<div class="t" style="left:765px;width:34px;text-align:right;top:632px;font-size:13px;color:#000;transform:scaleX(0.92);transform-origin:right">1</div>
<div class="t" style="left:799px;width:34px;text-align:right;top:632px;font-size:13px;color:#000;transform:scaleX(0.92);transform-origin:right">1</div>
<div class="t" style="left:833px;width:34px;text-align:right;top:632px;font-size:13px;color:#000;transform:scaleX(0.92);transform-origin:right">1</div>
<div class="t" style="left:867px;width:34px;text-align:right;top:632px;font-size:13px;color:#000;transform:scaleX(0.92);transform-origin:right">1</div>
<div class="t" style="left:901px;width:34px;text-align:right;top:632px;font-size:13px;color:#000;transform:scaleX(0.92);transform-origin:right">1</div>
<div class="t" style="left:935px;width:34px;text-align:right;top:632px;font-size:13px;color:#000;transform:scaleX(0.92);transform-origin:right">1</div>
<div class="t" style="left:969px;width:34px;text-align:right;top:632px;font-size:13px;color:#000;transform:scaleX(0.92);transform-origin:right">1</div>
<div class="t" style="left:1003px;width:34px;text-align:right;top:632px;font-size:13px;color:#000;transform:scaleX(0.92);transform-origin:right">1</div>
<div class="t" style="left:1037px;width:34px;text-align:right;top:632px;font-size:13px;color:#000;transform:scaleX(0.92);transform-origin:right">1</div>
<div class="t" style="left:1071px;width:34px;text-align:right;top:632px;font-size:13px;color:#000;transform:scaleX(0.92);transform-origin:right">1</div>
<div class="t" style="left:1105px;width:34px;text-align:right;top:632px;font-size:13px;color:#000;transform:scaleX(0.92);transform-origin:right">1</div>
<div class="t" style="left:1139px;width:34px;text-align:right;top:632px;font-size:13px;color:#000;transform:scaleX(0.92);transform-origin:right">1</div>
<div class="t" style="left:1173px;width:34px;text-align:right;top:632px;font-size:13px;color:#000;transform:scaleX(0.92);transform-origin:right">1</div>
<div class="t" style="left:1207px;width:34px;text-align:right;top:632px;font-size:13px;color:#000;transform:scaleX(0.92);transform-origin:right">1</div>
<div class="t" style="left:1241px;width:34px;text-align:right;top:632px;font-size:13px;color:#000;transform:scaleX(0.92);transform-origin:right">1</div>
<div class="t" style="left:1275px;width:34px;text-align:right;top:632px;font-size:13px;color:#000;transform:scaleX(0.92);transform-origin:right">1</div>
<div class="t" style="left:1309px;width:34px;text-align:right;top:632px;font-size:13px;color:#000;transform:scaleX(0.92);transform-origin:right">1</div>
<div class="a" style="left:729px;top:657px;width:634px;height:18px;background:#0a78f0"></div>
<div class="a" style="left:800px;top:657px;width:1px;height:18px;background:#8fb8e0"></div>
<div class="a" style="left:834px;top:657px;width:1px;height:18px;background:#8fb8e0"></div>
<div class="a" style="left:902px;top:657px;width:1px;height:18px;background:#8fb8e0"></div>
<div class="a" style="left:970px;top:657px;width:1px;height:18px;background:#8fb8e0"></div>
<div class="a" style="left:1039px;top:657px;width:1px;height:18px;background:#8fb8e0"></div>
<div class="a" style="left:1072px;top:657px;width:1px;height:18px;background:#8fb8e0"></div>
<div class="a" style="left:1106px;top:657px;width:1px;height:18px;background:#8fb8e0"></div>
<div class="a" style="left:1174px;top:657px;width:1px;height:18px;background:#8fb8e0"></div>
<div class="a" style="left:1242px;top:657px;width:1px;height:18px;background:#8fb8e0"></div>
<div class="a" style="left:1344px;top:657px;width:1px;height:18px;background:#8fb8e0"></div>
<div class="t" style="left:740px;width:26px;text-align:right;top:659px;font-size:11px;color:#000">43</div>
<div class="t" style="left:765px;width:34px;text-align:right;top:659px;font-size:13px;color:#000;transform:scaleX(0.92);transform-origin:right">43</div>
<div class="t" style="left:799px;width:34px;text-align:right;top:659px;font-size:13px;color:#000;transform:scaleX(0.92);transform-origin:right">43</div>
<div class="t" style="left:833px;width:34px;text-align:right;top:659px;font-size:13px;color:#000;transform:scaleX(0.92);transform-origin:right">43</div>
<div class="t" style="left:867px;width:34px;text-align:right;top:659px;font-size:13px;color:#000;transform:scaleX(0.92);transform-origin:right">43</div>
<div class="t" style="left:901px;width:34px;text-align:right;top:659px;font-size:13px;color:#000;transform:scaleX(0.92);transform-origin:right">43</div>
<div class="t" style="left:935px;width:34px;text-align:right;top:659px;font-size:13px;color:#000;transform:scaleX(0.92);transform-origin:right">43</div>
<div class="t" style="left:969px;width:34px;text-align:right;top:659px;font-size:13px;color:#000;transform:scaleX(0.92);transform-origin:right">43</div>
<div class="t" style="left:1003px;width:34px;text-align:right;top:659px;font-size:13px;color:#000;transform:scaleX(0.92);transform-origin:right">43</div>
<div class="t" style="left:1037px;width:34px;text-align:right;top:659px;font-size:13px;color:#000;transform:scaleX(0.92);transform-origin:right">43</div>
<div class="t" style="left:1071px;width:34px;text-align:right;top:659px;font-size:13px;color:#000;transform:scaleX(0.92);transform-origin:right">43</div>
<div class="t" style="left:1105px;width:34px;text-align:right;top:659px;font-size:13px;color:#000;transform:scaleX(0.92);transform-origin:right">43</div>
<div class="t" style="left:1139px;width:34px;text-align:right;top:659px;font-size:13px;color:#000;transform:scaleX(0.92);transform-origin:right">43</div>
<div class="t" style="left:1173px;width:34px;text-align:right;top:659px;font-size:13px;color:#000;transform:scaleX(0.92);transform-origin:right">43</div>
<div class="t" style="left:1207px;width:34px;text-align:right;top:659px;font-size:13px;color:#000;transform:scaleX(0.92);transform-origin:right">43</div>
<div class="t" style="left:1241px;width:34px;text-align:right;top:659px;font-size:13px;color:#000;transform:scaleX(0.92);transform-origin:right">43</div>
<div class="t" style="left:1275px;width:34px;text-align:right;top:659px;font-size:13px;color:#000;transform:scaleX(0.92);transform-origin:right">43</div>
<div class="t" style="left:1309px;width:34px;text-align:right;top:659px;font-size:13px;color:#000;transform:scaleX(0.92);transform-origin:right">43</div>
<div class="a lab2" style="left:665px;top:603px;width:64px;height:21px"></div>
<div class="t" style="left:667px;top:606px;font-size:11px;font-weight:bold;color:#8b1a1a">Ελεύθερα:</div>
<div class="a lab2" style="left:665px;top:628px;width:64px;height:22px"></div>
<div class="t" style="left:667px;top:633px;font-size:11px;font-weight:bold;color:#8b1a1a">Κρατημένα:</div>
<div class="a lab2" style="left:665px;top:650px;width:64px;height:18px"></div>
<div class="t" style="left:667px;top:655px;font-size:11px;font-weight:bold;color:#8b1a1a">Ελεύθερα</div>
<div class="a" style="left:665px;top:668px;width:64px;height:18px;background:#fff"></div>
<div class="a" style="left:665px;top:685px;width:698px;height:18px;background:#f0f0f0;border-top:1px solid #a0a0a0"></div>
<div class="a" style="left:667px;top:687px;width:15px;height:15px;border:1px solid #a8a8a8;background:#fff"></div>
<svg class="a" style="left:667px;top:687px" width="15" height="15"><path d="M9 4L5 7.5L9 11Z" fill="#606060"/></svg>
<div class="a" style="left:681px;top:687px;width:413px;height:15px;border:1px solid #a8a8a8;border-left:2px solid #a8a8a8;background:#fff"></div>
<div class="a" style="left:1347px;top:687px;width:15px;height:15px;border:1px solid #a8a8a8;background:#fff"></div>
<svg class="a" style="left:1347px;top:687px" width="15" height="15"><path d="M6 4L10 7.5L6 11Z" fill="#606060"/></svg>
<!-- FRONT END -->
<!-- Status bar -->
<div class="a" style="left:0;top:704px;width:1365px;height:24px;background:#f0f0f0;border-top:2px solid #fafafa"></div><div class="a" style="left:0;top:706px;width:1365px;height:1px;background:#c6c6c6"></div>
<div class="t" style="left:7px;top:711px;font-size:12px;color:#333">Προβολή φόρμας</div>
<div class="t" style="left:1134px;top:710px;font-size:11.6px;color:#333">Κλείδωμα αριθμών</div>
<div class="a" style="left:1251px;top:707px;width:38px;height:21px;background:#c8c8c8"></div>

<!-- ICONS START -->
<!-- title bar icons -->
<svg class="a" style="left:0;top:0" width="1365" height="52">
 <g fill="none" stroke="#922f32" stroke-width="2.6">
  <circle cx="873" cy="15" r="3.3" stroke-width="2.2"/>
  <path d="M876.3 15H1047.7M1054.3 15H1073L1128 52"/>
  <circle cx="1051" cy="15" r="3.3" stroke-width="2.2"/>
  <circle cx="939.5" cy="33.5" r="3.3" stroke-width="2.2"/>
  <path d="M942.8 33.5H1035L1062 52"/>
  <path d="M976 52L988 44H1076.7M1083.3 44H1090L1101 52"/>
  <circle cx="1080" cy="44" r="3.3" stroke-width="2.2"/>
  <circle cx="893" cy="40" r="17" stroke-width="4"/>
  <path d="M886 34L900.5 46.5M883.7 47.5V31.6H899" stroke-width="4"/>
  <path d="M1100 30L1128 52" stroke-width="3.5"/>
  <circle cx="1147" cy="18.5" r="26.5" stroke-width="6"/>
  <path d="M1137 29L1157 8.5M1135.6 7H1158.5V29" stroke-width="6"/>
  <path d="M1238 52L1262 26H1365"/>
  <path d="M1318 33L1349 0M1333 33L1364 0"/>
 </g>
</svg>
<svg class="a" style="left:20px;top:8px" width="14" height="14"><path fill="#fff" d="M0 0H14V14H0Z"/><path fill="#a4373a" d="M2.3 2H11.7V6H2.3Z"/><path fill="#a4373a" d="M3 8.5H11V12.5H8.2V10H5.8V12.5H3Z"/></svg>
<svg class="a" style="left:64px;top:6px" width="18" height="18">
 <path fill="#fff" d="M7 1H17V9H7Z"/><path fill="#a4373a" d="M8 3H10V4.5H8ZM11 3H16V4.5H11ZM8 5.5H10V7H8ZM11 5.5H16V7H11Z"/>
 <path fill="#fff" d="M1 5.5L10 4V17.5L1 16.5Z"/><path fill="#a4373a" d="M3 14L5 7.5H6.5L8 14H6.7L6.3 12.5H5L4.5 14ZM5.3 11.3H6.1L5.7 9.5Z"/>
 <path fill="none" stroke="#fff" stroke-width="1.5" d="M13.5 17.5V12M11 14.5L13.5 12L16 14.5"/>
</svg>
<svg class="a" style="left:108px;top:8px" width="16" height="14"><path fill="none" stroke="#c97a7c" stroke-width="2" d="M6 1L2 5L6 9M2 5H9C12 5 14 7 14 9.5C14 12 12 13 10 13"/></svg>
<svg class="a" style="left:131px;top:13px" width="8" height="4"><path fill="#c97a7c" d="M0 0H7L3.5 3.5Z"/></svg>
<svg class="a" style="left:152px;top:8px" width="16" height="14"><path fill="none" stroke="#c97a7c" stroke-width="2" d="M10 1L14 5L10 9M14 5H7C4 5 2 7 2 9.5C2 12 4 13 6 13"/></svg>
<svg class="a" style="left:175px;top:13px" width="8" height="4"><path fill="#c97a7c" d="M0 0H7L3.5 3.5Z"/></svg>
<svg class="a" style="left:199px;top:6px" width="15" height="18">
 <path fill="none" stroke="#fff" stroke-width="1.6" d="M3.5 8A4 4 0 1 1 10.5 8"/>
 <path fill="#fff" d="M5.5 5.5C5.5 4.3 7.5 4.3 7.5 5.5V10.5L11.5 11.5C13 12 13.5 13 13.5 14.5V17.5H6L1.5 13C1 12 2 11 3 11.5L5.5 13Z"/>
</svg>
<svg class="a" style="left:220px;top:13px" width="8" height="4"><path fill="#fff" d="M0 0H7L3.5 3.5Z"/></svg>
<svg class="a" style="left:249px;top:11px" width="7" height="8"><path fill="#fff" d="M0 0H7V1.3H0ZM0 3H7L3.5 7Z"/></svg>
<div class="t" style="left:1201px;top:9px;font-size:12.5px;color:#fff">?</div>
<div class="a" style="left:1246px;top:15px;width:10px;height:1px;background:#fff"></div>
<svg class="a" style="left:1292px;top:10px" width="11" height="11"><path fill="none" stroke="#fff" d="M0.5 2.5H8.5V10.5H0.5ZM2.5 2.5V0.5H10.5V8.5H8.5"/></svg>
<svg class="a" style="left:1337px;top:10px" width="11" height="11"><path stroke="#fff" stroke-width="1.1" d="M0.5 0.5L10.5 10.5M10.5 0.5L0.5 10.5"/></svg>
<svg class="a" style="left:557px;top:37px" width="13" height="17"><path fill="none" stroke="#ecd0d0" stroke-width="1.1" d="M4 11C4 9 1.5 7.5 1.5 5A5 5 0 0 1 11.5 5C11.5 7.5 9 9 9 11V12.5H4Z M4.5 14.5H8.5"/></svg>

<!-- nav icons -->
<svg class="a" style="left:24px;top:80px" width="34" height="36">
 <path fill="#fff" d="M7 2.5Q7 2 7.5 2H31.5Q32 2 32 2.5V33.5Q32 34 31.5 34H7.5Q7 34 7 33.5Z"/>
 <path fill="#3280c6" d="M20.5 2H26.7V11L23.6 8L20.5 11Z"/>
 <rect x="2.6" y="6.2" width="7.5" height="5.6" rx="2.8" fill="#fff"/><rect x="4.3" y="7.8" width="4.5" height="2.4" rx="1.2" fill="#3280c6"/>
 <rect x="2.6" y="23.4" width="7.5" height="5.6" rx="2.8" fill="#fff"/><rect x="4.3" y="25" width="4.5" height="2.4" rx="1.2" fill="#3280c6"/>
</svg>
<svg class="a" style="left:23px;top:150px" width="34" height="26">
 <path fill="#fff" d="M5 2.2Q5 1 6.2 1H28.8Q30 1 30 2.2V9L33.2 15.2H0.8L5 9Z"/>
 <rect x="9.2" y="5.8" width="15" height="4.2" rx="2" fill="#1f4b77"/>
 <path fill="#1f4b77" d="M7.2 11H26.8L29.8 14.3H4.2Z"/>
 <rect x="1" y="16" width="32" height="9" rx="1" fill="#fff"/>
</svg>
<svg class="a" style="left:23px;top:214px" width="34" height="30">
 <circle cx="9" cy="6" r="4.9" fill="#fff"/><circle cx="25" cy="6" r="4.9" fill="#fff"/>
 <path fill="#fff" d="M1 23V17C1 13 4 11 9 11S17 13 17 17V23Q9 25 1 23Z"/>
 <path fill="#fff" d="M17 23V17C17 13 20 11 25 11S33 13 33 17V23Q25 25 17 23Z"/>
 <circle cx="17.4" cy="11" r="6.2" fill="#1f4b77"/><circle cx="17.4" cy="11" r="5" fill="#fff"/>
 <path fill="#1f4b77" d="M7.6 29V22C7.6 17.5 11.5 14.6 17.5 14.6S27.4 17.5 27.4 22V29Q17.5 31 7.6 29Z"/>
 <path fill="#fff" d="M8.8 28V22C8.8 18.5 12 15.8 17.5 15.8S26.2 18.5 26.2 22V28Q17.5 30 8.8 28Z"/>
</svg>
<svg class="a" style="left:23px;top:276px" width="34" height="36">
 <path stroke="#fff" stroke-width="1.2" d="M9.3 13.6L24.3 6.7M9.3 13.6L22.6 27.7"/>
 <clipPath id="c1"><circle cx="9.3" cy="13.6" r="4.90"/></clipPath>
 <circle cx="9.3" cy="13.6" r="5.7" fill="#fff"/>
 <g clip-path="url(#c1)"><circle cx="9.3" cy="11.04" r="2.05" fill="#1f4b77"/>
 <path fill="#1f4b77" d="M4.46 19.30Q4.46 14.17 9.3 14.17Q14.14 14.17 14.14 19.30Z"/>
 <path fill="#fff" d="M9.3 14.57L8.56 17.88L9.3 18.73L10.04 17.88Z"/></g><clipPath id="c2"><circle cx="24.3" cy="6.7" r="3.27"/></clipPath>
 <circle cx="24.3" cy="6.7" r="3.8" fill="#fff"/>
 <g clip-path="url(#c2)"><circle cx="24.3" cy="4.99" r="1.37" fill="#1f4b77"/>
 <path fill="#1f4b77" d="M21.07 10.50Q21.07 7.08 24.3 7.08Q27.53 7.08 27.53 10.50Z"/>
 <path fill="#fff" d="M24.3 7.48L23.81 9.55L24.3 10.12L24.79 9.55Z"/></g><clipPath id="c3"><circle cx="22.6" cy="27.7" r="6.71"/></clipPath>
 <circle cx="22.6" cy="27.7" r="7.8" fill="#fff"/>
 <g clip-path="url(#c3)"><circle cx="22.6" cy="24.19" r="2.81" fill="#1f4b77"/>
 <path fill="#1f4b77" d="M15.97 35.50Q15.97 28.48 22.6 28.48Q29.23 28.48 29.23 35.50Z"/>
 <path fill="#fff" d="M22.6 28.88L21.59 33.55L22.6 34.72L23.61 33.55Z"/></g>
</svg>
<svg class="a" style="left:23px;top:344px" width="34" height="34">
 <circle cx="17" cy="17" r="16.1" fill="#fff"/>
 <circle cx="17" cy="10.6" r="4.8" fill="#1f4b77"/>
 <ellipse cx="17" cy="23.3" rx="9.4" ry="4.5" fill="#1f4b77"/>
</svg>
<svg class="a" style="left:23px;top:410px" width="34" height="34">
 <path fill="#fff" d="M1 0.6H3V31H33.2V33H1Z"/>
 <path fill="#fff" d="M6.8 20L11.2 17V29H6.8ZM13 14.5L17.4 12.5V29H13ZM19.1 14.5L23.2 15V29H19.1ZM25 13L29 10V29H25Z"/>
 <path fill="none" stroke="#1f4b77" stroke-width="3.2" d="M5 20L15.3 11.5L24.3 14L29 7"/>
 <path fill="none" stroke="#fff" stroke-width="1.6" d="M6.5 18.6L15.3 10.6L24.3 13.4L28.6 6.8"/>
 <path fill="#fff" d="M22 7.5L29.2 2.5L29 10Z"/>
</svg>
<svg class="a" style="left:23px;top:478px" width="34" height="34">
 <path fill="#fff" d="M1 1H29.4V24.5H27V8H3.2V23H22.5V25.1H1Z"/>
 <circle cx="8.5" cy="12.8" r="1.6" fill="#fff"/><circle cx="8.5" cy="17.6" r="1.6" fill="#fff"/>
 <rect x="11.2" y="11.6" width="13" height="2.4" rx="1.2" fill="#fff"/><rect x="11.2" y="16.4" width="13" height="2.4" rx="1.2" fill="#fff"/>
 <path fill="#1f4b77" d="M24 21H31V24H34V31H31V34H24V31H21V24H24Z"/>
 <path fill="#fff" d="M26.2 19H30.2V21.8H33V25.8H30.2V28.8H26.2V25.8H23.4V21.8H26.2Z"/>
</svg>
<svg class="a" style="left:23px;top:538px" width="34" height="40">
 <circle cx="20.3" cy="8.3" r="3.7" fill="#fff"/>
 <path fill="#fff" d="M10 22C13 19.5 17.5 16.5 22.5 16.5L17.5 31.5C17 33 18.5 33 23.9 29.5V31.3C20 35 16 37 13.5 36.5C11.8 36 11.6 34.5 12.2 32.5L16.3 21.4C14.5 21.6 12.5 22.6 10.7 23.5Z"/>
</svg>
<svg class="a" style="left:300px;top:469px" width="10" height="15"><path fill="#fff" d="M1.5 0.5L9 7.5L1.5 14.5Z"/></svg>

<!-- form icons in window title bars -->
<svg class="a" style="left:374px;top:76px" width="16" height="15">
 <defs><linearGradient id="fg" x1="0" y1="0" x2="0" y2="1"><stop offset="0" stop-color="#fff"/><stop offset="1" stop-color="#dde3f5"/></linearGradient></defs><rect x="0.5" y="0.5" width="15" height="14" fill="url(#fg)" stroke="#56648e"/>
 <rect x="0" y="0" width="16" height="3" fill="#c8446c"/>
 <path stroke="#5565a0" d="M2 5.5H7M2 9.5H7"/><rect x="8.5" y="5.5" width="4.5" height="2.5" fill="#fff" stroke="#56648e"/><rect x="8.5" y="9.5" width="4.5" height="2.5" fill="#fff" stroke="#56648e"/>
</svg>
<svg class="a" style="left:675px;top:283px" width="16" height="15">
 <rect x="0.5" y="0.5" width="15" height="14" fill="url(#fg)" stroke="#56648e"/>
 <rect x="0" y="0" width="16" height="3" fill="#c8446c"/>
 <path stroke="#5565a0" d="M2 5.5H7M2 9.5H7"/><rect x="8.5" y="5.5" width="4.5" height="2.5" fill="#fff" stroke="#56648e"/><rect x="8.5" y="9.5" width="4.5" height="2.5" fill="#fff" stroke="#56648e"/>
</svg>
<!-- checkmark on back form -->
<svg class="a" style="left:654px;top:150px" width="13" height="13"><path fill="none" stroke="#3a3a3a" stroke-width="1.2" d="M2 7L5 9.8L11 3.2"/></svg>

<!-- status bar icons -->
<svg class="a" style="left:1263px;top:710px" width="14" height="13">
 <path fill="#6a6a6a" d="M0 0H14V3H0Z"/><path fill="none" stroke="#6a6a6a" d="M0.5 0.5H13.5V12.5H0.5Z"/>
 <path stroke="#6a6a6a" d="M2 6.5H5M2 9.5H5"/><path fill="#6a6a6a" d="M7 5.5H12V7.5H7ZM7 8.5H12V10.5H7Z"/>
</svg>
<svg class="a" style="left:1301px;top:710px" width="14" height="13">
 <path fill="none" stroke="#6a6a6a" d="M0.5 0.5H13.5V12.5H0.5ZM4.5 0.5V12.5M4.5 3.5H13.5"/>
 <path stroke="#6a6a6a" d="M6 6.5H8M9.5 6.5H11.5M6 9.5H8M9.5 9.5H11.5"/>
</svg>
<svg class="a" style="left:1339px;top:710px" width="15" height="13">
 <path fill="none" stroke="#6a6a6a" d="M0.5 0.5V7.5H5.5ZM2 4.5V6H3.5"/>
 <path fill="none" stroke="#6a6a6a" stroke-width="1.6" d="M6 7L12.5 0.8"/>
 <path fill="none" stroke="#6a6a6a" d="M0.5 9.5H13.5V12.5H0.5ZM3.5 9.5V10.5M6.5 9.5V10.5M9.5 9.5V10.5"/>
</svg>

<!-- ICONS END -->
</body></html>
